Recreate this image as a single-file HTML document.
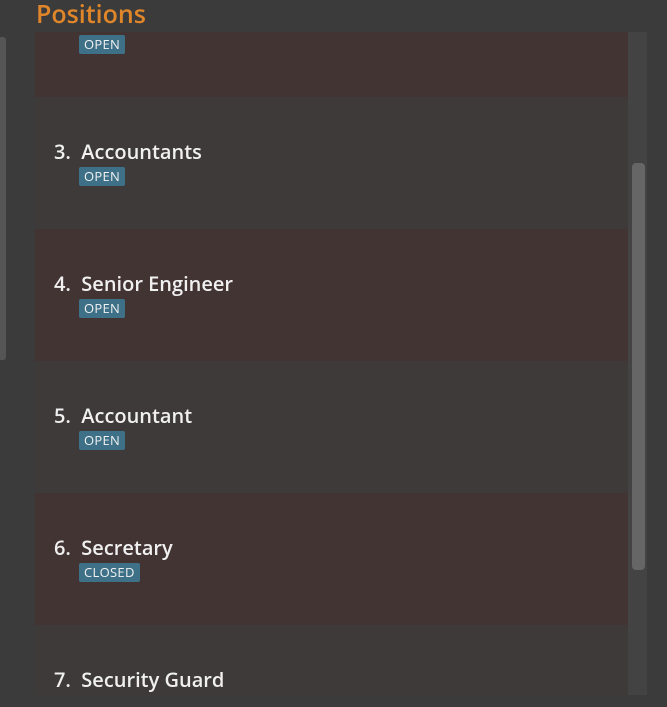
<!DOCTYPE html>
<html><head><style>
html,body{margin:0;width:667px;height:707px;overflow:hidden}
body{background:#3b3b3b;position:relative;font-family:"Open Sans","Liberation Sans",sans-serif}
.h{position:absolute;left:36px;top:-3px;color:#e0862a;font-size:25px;font-weight:600}
.ls{position:absolute;left:0;top:37px;width:6px;height:323px;background:#555;border-radius:0 3px 3px 0}
.list{position:absolute;left:35px;top:32px;width:593px;height:663px;overflow:hidden}
.row{position:absolute;left:0;width:593px;height:132px}
.a{background:#3e3a3a}.b{background:#433434}
.t{position:absolute;left:19px;top:41px;color:#f0f0f0;font-size:20px;font-weight:600;white-space:pre}
.bd{position:absolute;left:44px;top:70px;background:#3e7187;color:#f2f2f2;font-size:13px;padding:1px 5px;border-radius:2px;line-height:17px;letter-spacing:0.3px}
.tr{position:absolute;left:628px;top:32px;width:19px;height:663px;background:#434343}
.th{position:absolute;left:632px;top:163px;width:13px;height:407px;background:#666;border-radius:4px}
</style></head><body>
<div class="h">Positions</div>
<div class="ls"></div>
<div class="list">
<div class="row b" style="top:-67px"><div class="bd">OPEN</div></div>
<div class="row a" style="top:65px"><div class="t">3.  Accountants</div><div class="bd">OPEN</div></div>
<div class="row b" style="top:197px"><div class="t">4.  Senior Engineer</div><div class="bd">OPEN</div></div>
<div class="row a" style="top:329px"><div class="t">5.  Accountant</div><div class="bd">OPEN</div></div>
<div class="row b" style="top:461px"><div class="t">6.  Secretary</div><div class="bd">CLOSED</div></div>
<div class="row a" style="top:593px"><div class="t">7.  Security Guard</div><div class="bd">CLOSED</div></div>
</div>
<div class="tr"></div><div class="th"></div>
</body></html>
